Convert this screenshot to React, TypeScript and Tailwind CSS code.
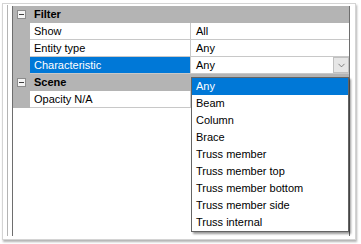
import { ChevronDown } from "lucide-react";

type Row =
  | { kind: "group"; label: string }
  | { kind: "prop"; label: string; value: string; selected?: boolean };

const ROWS: Row[] = [
  { kind: "group", label: "Filter" },
  { kind: "prop", label: "Show", value: "All" },
  { kind: "prop", label: "Entity type", value: "Any" },
  { kind: "prop", label: "Characteristic", value: "Any", selected: true },
  { kind: "group", label: "Scene" },
  { kind: "prop", label: "Opacity N/A", value: "" },
];

const OPTIONS = [
  "Any",
  "Beam",
  "Column",
  "Brace",
  "Truss member",
  "Truss member top",
  "Truss member bottom",
  "Truss member side",
  "Truss internal",
];

/** Квадрат с минусом у заголовка группы. */
function Collapse() {
  return (
    <span className="ml-[4px] flex h-[9px] w-[9px] items-center justify-center border border-[#8c8c8c] bg-[#f4f4f4]">
      <span className="h-px w-[5px] bg-[#404040]" />
    </span>
  );
}

export default function App() {
  return (
    <div
      className="relative h-[244px] w-[361px] bg-white text-[11px] leading-none text-black"
      style={{ fontFamily: '"Liberation Sans", Arial, sans-serif' }}
    >
      <div className="ml-[2px] mt-[3px] h-[237px] w-[354px] border border-[#d4d4d4] pl-[4px] pt-[1px] shadow-[1px_2px_2px_rgba(0,0,0,0.3)]">
        <div className="h-[231px] border-l border-[#b4b4b4] pl-[4px] pt-[1px]">
          <div className="h-[230px] w-[338px] border-l border-r border-[#6e6e6e]">
            {ROWS.map((r) =>
              r.kind === "group" ? (
                <div key={r.label} className="flex h-[17px] items-center bg-[#b4b4b4]">
                  <Collapse />
                  <span className="pl-[8px] font-bold">{r.label}</span>
                </div>
              ) : (
                <div key={r.label} className="flex h-[17px]">
                  <div className="w-[17px] bg-[#b4b4b4]" />
                  <div
                    className={
                      "flex w-[161px] items-center border-b border-r border-[#c8c8c8] pl-[4px] " +
                      (r.selected ? "bg-[#0078d7] text-white" : "bg-white")
                    }
                  >
                    {r.label}
                  </div>
                  <div className="flex flex-1 items-center justify-between border-b border-[#c8c8c8] bg-white pl-[5px]">
                    <span>{r.value}</span>
                    {r.selected && (
                      <span className="flex h-[16px] w-[16px] items-center justify-center border border-[#c0c0c0] bg-[#e6e6e6]">
                        <ChevronDown size={11} strokeWidth={1.5} color="#505050" />
                      </span>
                    )}
                  </div>
                </div>
              )
            )}
          </div>
        </div>
      </div>

      {/* выпадающий список */}
      <div className="absolute left-[191px] top-[74px] w-[158px] border border-[#646464] bg-white shadow-[2px_2px_2px_rgba(0,0,0,0.4)]">
        {OPTIONS.map((o, i) => (
          <div
            key={o}
            className={
              "flex h-[17px] items-center pl-[4px] " + (i === 0 ? "bg-[#0078d7] text-white" : "")
            }
          >
            {o}
          </div>
        ))}
      </div>
    </div>
  );
}
